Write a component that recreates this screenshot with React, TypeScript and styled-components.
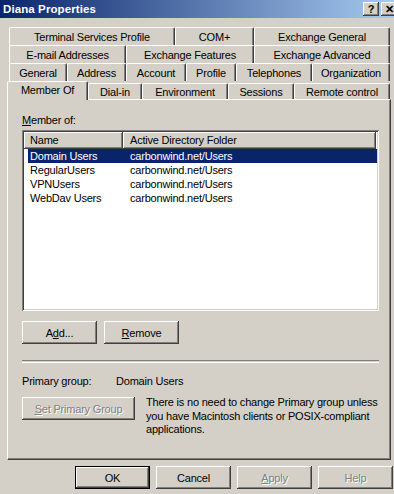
import React from 'react'
import styled, { createGlobalStyle } from 'styled-components'

const GlobalStyle = createGlobalStyle`
	html, body {
		margin: 0;
		padding: 0;
		background: #d4d0c8;
	}
	body {
		font-family: "Liberation Sans", Arial, sans-serif;
		font-size: 11px;
		letter-spacing: -0.2px;
		color: #000;
	}
`

const raised = `
	box-shadow: inset -1px -1px #404040, inset 1px 1px #ffffff, inset -2px -2px #808080, inset 2px 2px #d4d0c8;
`

const Window = styled.div`
	width: 394px;
	height: 494px;
	background: #d4d0c8;
	overflow: hidden;
	display: flex;
	flex-direction: column;
`

const TitleBar = styled.div`
	height: 18px;
	display: flex;
	align-items: center;
	justify-content: space-between;
	padding-left: 3px;
	background: linear-gradient(to right, #0a246a, #a6caf0);
	overflow: hidden;
`

const TitleText = styled.span`
	color: #fff;
	font-weight: bold;
	font-size: 11.5px;
	letter-spacing: 0.1px;
`

const TitleButtons = styled.div`
	display: flex;
	gap: 2px;
	margin-right: -3px;
`

const TitleButton = styled.div`
	width: 16px;
	height: 14px;
	background: #d4d0c8;
	${raised}
	display: flex;
	align-items: center;
	justify-content: center;
	font-weight: bold;
	font-size: 11px;
	line-height: 14px;
	color: #000;
`

const Body = styled.div`
	padding: 9px 1px 0 7px;
	display: flex;
	flex-direction: column;
`

const TabStrip = styled.div`
	display: flex;
	flex-direction: column;
`

const TabRow = styled.div<{ $indent: number }>`
	display: flex;
	align-items: flex-end;
	height: 18px;
	padding-left: ${p => p.$indent}px;
`

const Tab = styled.div<{ $w: number; $active?: boolean }>`
	box-sizing: border-box;
	width: ${p => p.$w}px;
	height: ${p => (p.$active ? 19 : 18)}px;
	margin-bottom: ${p => (p.$active ? -1 : 0)}px;
	position: relative;
	z-index: ${p => (p.$active ? 1 : 0)};
	background: #d4d0c8;
	border-top: 1px solid #fff;
	border-left: 1px solid #fff;
	border-right: 1px solid #404040;
	border-top-left-radius: 2px;
	border-top-right-radius: 2px;
	box-shadow: inset -1px 0 #808080;
	display: flex;
	align-items: ${p => (p.$active ? 'flex-start' : 'center')};
	padding-top: ${p => (p.$active ? 2 : 0)}px;
	justify-content: center;
	white-space: nowrap;
`

const LastRow = styled(TabRow)`
	height: 18px;
	align-items: flex-end;
	& > div:not(:first-child) {
		height: 16px;
	}
`

const Panel = styled.div`
	box-sizing: border-box;
	width: 384px;
	height: 361px;
	border-top: 1px solid #fff;
	border-left: 1px solid #fff;
	border-right: 1px solid #404040;
	border-bottom: 1px solid #404040;
	box-shadow: inset -1px -1px #808080;
	padding: 14px 11px 0 14px;
	display: flex;
	flex-direction: column;
`

const Label = styled.div`
	line-height: 13px;
	height: 13px;
`

const ListView = styled.div`
	margin-top: 3px;
	height: 181px;
	box-sizing: border-box;
	background: #fff;
	padding: 2px;
	box-shadow: inset 1px 1px #808080, inset -1px -1px #ffffff, inset 2px 2px #404040, inset -2px -2px #d4d0c8;
	display: flex;
	flex-direction: column;
`

const Header = styled.div`
	display: flex;
	height: 17px;
	margin-right: 1px;
`

const HeaderCell = styled.div<{ $w?: number }>`
	box-sizing: border-box;
	${p => (p.$w ? `width: ${p.$w}px;` : 'flex: 1;')}
	background: #d4d0c8;
	${raised}
	padding-left: ${p => (p.$w ? 6 : 7)}px;
	line-height: 17px;
`

const Row = styled.div<{ $selected?: boolean }>`
	display: grid;
	grid-template-columns: 100px 1fr;
	height: 14px;
	line-height: 14px;
	margin-left: 4px;
	padding-left: 2px;
	background: ${p => (p.$selected ? '#0a246a' : 'transparent')};
	color: ${p => (p.$selected ? '#fff' : '#000')};
`

const ButtonRow = styled.div<{ $gap: number; $end?: boolean }>`
	display: flex;
	gap: ${p => p.$gap}px;
	justify-content: ${p => (p.$end ? 'flex-end' : 'flex-start')};
`

const Button = styled.div<{ $w?: number; $disabled?: boolean; $default?: boolean }>`
	box-sizing: border-box;
	width: ${p => p.$w ?? 75}px;
	height: 23px;
	background: #d4d0c8;
	${raised}
	${p => p.$default && 'border: 1px solid #000;'}
	display: flex;
	align-items: center;
	justify-content: center;
	color: ${p => (p.$disabled ? '#808080' : '#000')};
	text-shadow: ${p => (p.$disabled ? '1px 1px 0 #fff' : 'none')};
	white-space: nowrap;
`

const ListButtons = styled(ButtonRow)`
	margin-top: 10px;
`

const Separator = styled.div`
	margin-top: 16px;
	height: 1px;
	border-top: 1px solid #808080;
	border-bottom: 1px solid #fff;
`

const InfoRow = styled.div`
	display: flex;
	line-height: 13px;
	margin-top: 12px;
`

const InfoLabel = styled.div`
	width: 94px;
`

const PrimaryRow = styled.div`
	display: flex;
	gap: 11px;
	margin-top: 9px;
	align-items: flex-start;
`

const Description = styled.div`
	line-height: 13.5px;
	margin-top: -1px;
`

const Footer = styled(ButtonRow)`
	margin-top: 6px;
`

const U = styled.span`
	text-decoration: underline;
`

const rows = [
	{ name: 'Domain Users', folder: 'carbonwind.net/Users' },
	{ name: 'RegularUsers', folder: 'carbonwind.net/Users' },
	{ name: 'VPNUsers', folder: 'carbonwind.net/Users' },
	{ name: 'WebDav Users', folder: 'carbonwind.net/Users' },
]

export default function App() {
	return (
		<>
			<GlobalStyle />
			<Window>
				<TitleBar>
					<TitleText>Diana Properties</TitleText>
					<TitleButtons>
						<TitleButton>?</TitleButton>
						<TitleButton>✕</TitleButton>
					</TitleButtons>
				</TitleBar>
				<Body>
					<TabStrip>
						<TabRow $indent={2}>
							<Tab $w={166}>Terminal Services Profile</Tab>
							<Tab $w={79}>COM+</Tab>
							<Tab $w={136}>Exchange General</Tab>
						</TabRow>
						<TabRow $indent={2}>
							<Tab $w={117}>E-mail Addresses</Tab>
							<Tab $w={128}>Exchange Features</Tab>
							<Tab $w={136}>Exchange Advanced</Tab>
						</TabRow>
						<TabRow $indent={2}>
							<Tab $w={58}>General</Tab>
							<Tab $w={59}>Address</Tab>
							<Tab $w={60}>Account</Tab>
							<Tab $w={50}>Profile</Tab>
							<Tab $w={76}>Telephones</Tab>
							<Tab $w={78}>Organization</Tab>
						</TabRow>
						<LastRow $indent={0}>
							<Tab $w={81} $active>Member Of</Tab>
							<Tab $w={54}>Dial-in</Tab>
							<Tab $w={86}>Environment</Tab>
							<Tab $w={66}>Sessions</Tab>
							<Tab $w={96}>Remote control</Tab>
						</LastRow>
					</TabStrip>
					<Panel>
						<Label><U>M</U>ember of:</Label>
						<ListView>
							<Header>
								<HeaderCell $w={99}>Name</HeaderCell>
								<HeaderCell>Active Directory Folder</HeaderCell>
							</Header>
							{rows.map((r, i) => (
								<Row key={r.name} $selected={i === 0}>
									<span>{r.name}</span>
									<span>{r.folder}</span>
								</Row>
							))}
						</ListView>
						<ListButtons $gap={7}>
							<Button>A<U>d</U>d...</Button>
							<Button><U>R</U>emove</Button>
						</ListButtons>
						<Separator />
						<InfoRow>
							<InfoLabel>Primary group:</InfoLabel>
							<span>Domain Users</span>
						</InfoRow>
						<PrimaryRow>
							<Button $w={113} $disabled><U>S</U>et Primary Group</Button>
							<Description>
								There is no need to change Primary group unless<br />
								you have Macintosh clients or POSIX-compliant<br />
								applications.
							</Description>
						</PrimaryRow>
					</Panel>
					<Footer $gap={6} $end>
						<Button $default>OK</Button>
						<Button>Cancel</Button>
						<Button $disabled><U>A</U>pply</Button>
						<Button $disabled>Help</Button>
					</Footer>
				</Body>
			</Window>
		</>
	)
}
